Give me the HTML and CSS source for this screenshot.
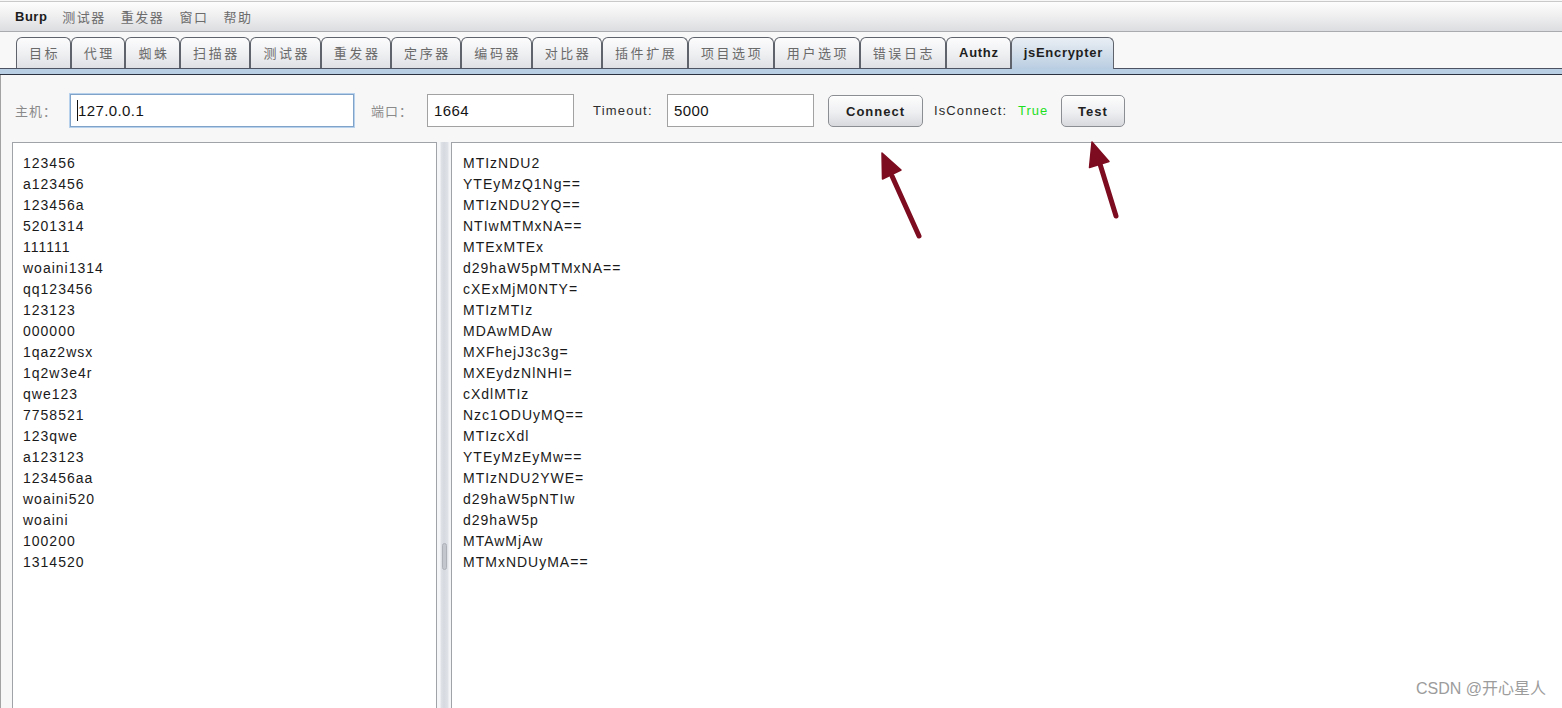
FILE: index.html
```html
<!DOCTYPE html>
<html lang="zh-CN">
<head>
<meta charset="utf-8">
<title>Burp - jsEncrypter</title>
<link rel="stylesheet" href="styles.css">
</head>
<body>
<div class="app">
  <div class="menubar">
    <span class="menu menu-main">Burp</span>
    <span class="menu">测试器</span>
    <span class="menu">重发器</span>
    <span class="menu">窗口</span>
    <span class="menu">帮助</span>
  </div>

  <div class="tabbar">
    <div class="tabs">
      <div class="tab">目标</div>
      <div class="tab">代理</div>
      <div class="tab">蜘蛛</div>
      <div class="tab">扫描器</div>
      <div class="tab">测试器</div>
      <div class="tab">重发器</div>
      <div class="tab">定序器</div>
      <div class="tab">编码器</div>
      <div class="tab">对比器</div>
      <div class="tab">插件扩展</div>
      <div class="tab">项目选项</div>
      <div class="tab">用户选项</div>
      <div class="tab">错误日志</div>
      <div class="tab tab-latin tab-authz">Authz</div>
      <div class="tab tab-latin tab-active">jsEncrypter</div>
    </div>
    <div class="tabstrip"></div>
  </div>

  <div class="content">
    <div class="form-row">
      <span class="lbl lbl-host">主机：</span>
      <div class="field field-host field-focus"><span class="caret"></span>127.0.0.1</div>
      <span class="lbl lbl-port">端口：</span>
      <div class="field field-port">1664</div>
      <span class="lbl lbl-timeout">Timeout:</span>
      <div class="field field-timeout">5000</div>
      <button class="btn btn-connect">Connect</button>
      <span class="lbl lbl-status">IsConnect:</span>
      <span class="status-true">True</span>
      <button class="btn btn-test">Test</button>
    </div>

    <div class="panes">
      <div class="pane pane-left">
        <div class="line">123456</div>
        <div class="line">a123456</div>
        <div class="line">123456a</div>
        <div class="line">5201314</div>
        <div class="line">111111</div>
        <div class="line">woaini1314</div>
        <div class="line">qq123456</div>
        <div class="line">123123</div>
        <div class="line">000000</div>
        <div class="line">1qaz2wsx</div>
        <div class="line">1q2w3e4r</div>
        <div class="line">qwe123</div>
        <div class="line">7758521</div>
        <div class="line">123qwe</div>
        <div class="line">a123123</div>
        <div class="line">123456aa</div>
        <div class="line">woaini520</div>
        <div class="line">woaini</div>
        <div class="line">100200</div>
        <div class="line">1314520</div>
      </div>
      <div class="splitter"><div class="grip"></div></div>
      <div class="pane pane-right">
        <div class="line">MTIzNDU2</div>
        <div class="line">YTEyMzQ1Ng==</div>
        <div class="line">MTIzNDU2YQ==</div>
        <div class="line">NTIwMTMxNA==</div>
        <div class="line">MTExMTEx</div>
        <div class="line">d29haW5pMTMxNA==</div>
        <div class="line">cXExMjM0NTY=</div>
        <div class="line">MTIzMTIz</div>
        <div class="line">MDAwMDAw</div>
        <div class="line">MXFhejJ3c3g=</div>
        <div class="line">MXEydzNlNHI=</div>
        <div class="line">cXdlMTIz</div>
        <div class="line">Nzc1ODUyMQ==</div>
        <div class="line">MTIzcXdl</div>
        <div class="line">YTEyMzEyMw==</div>
        <div class="line">MTIzNDU2YWE=</div>
        <div class="line">d29haW5pNTIw</div>
        <div class="line">d29haW5p</div>
        <div class="line">MTAwMjAw</div>
        <div class="line">MTMxNDUyMA==</div>
      </div>
    </div>
  </div>

  <svg class="annotations" width="1562" height="708" viewBox="0 0 1562 708" xmlns="http://www.w3.org/2000/svg">
    <g fill="#7d0c20" stroke="#7d0c20" stroke-linecap="round" stroke-linejoin="round">
      <line x1="919" y1="236" x2="892" y2="176" stroke-width="5"/>
      <polygon points="882,153 901,170 882.5,179" stroke-width="1.5"/>
      <line x1="1116" y1="216" x2="1100" y2="164" stroke-width="5"/>
      <polygon points="1092,142 1109,161.5 1089.5,167.5" stroke-width="1.5"/>
    </g>
  </svg>

  <div class="watermark">CSDN @开心星人</div>
</div>
</body>
</html>
```

FILE: styles.css
```css
* {
  box-sizing: border-box;
}

html, body {
  margin: 0;
  padding: 0;
  background: #ffffff;
}

body {
  font-family: "Liberation Sans", "Noto Sans CJK SC", sans-serif;
  color: #1a1a1a;
}

.app {
  position: relative;
  width: 1562px;
  height: 708px;
  overflow: hidden;
  background: #f7f7f7;
  display: flex;
  flex-direction: column;
}

/* ---------- menu bar ---------- */
.menubar {
  flex: none;
  margin-top: 1px;
  height: 31px;
  border-top: 1px solid #c9c9c9;
  border-bottom: 1px solid #a9abae;
  background: linear-gradient(#fdfdfd, #f0f0f1 45%, #dcdde0);
  display: flex;
  align-items: center;
  padding: 1px 0 0 15px;
}

.menu {
  font-family: "Noto Sans CJK SC", "Liberation Sans", sans-serif;
  font-size: 13px;
  letter-spacing: 1.5px;
  color: #6c6c6c;
  margin-right: 15px;
  line-height: 20px;
}

.menu-main {
  font-family: "Liberation Sans", sans-serif;
  font-weight: bold;
  letter-spacing: 0.5px;
  color: #1c1c1c;
}

/* ---------- tabs ---------- */
.tabbar {
  flex: none;
  padding-top: 5px;
  background: #f8f8f8;
}

.tabs {
  display: flex;
  align-items: flex-end;
  padding-left: 16px;
  height: 31px;
}

.tab {
  height: 31px;
  padding: 0 9.5px 0 12px;
  border: 1px solid #5f636b;
  border-bottom: none;
  border-radius: 6px 6px 0 0;
  background: linear-gradient(#fcfcfd, #eeeff1 55%, #dfe0e4);
  font-family: "Noto Sans CJK SC", "Liberation Sans", sans-serif;
  font-size: 13px;
  letter-spacing: 2.6px;
  line-height: 30px;
  color: #6a6a6a;
  white-space: nowrap;
}

.tab-latin {
  font-family: "Liberation Sans", sans-serif;
  font-weight: bold;
  letter-spacing: 0.7px;
  color: #1e1e1e;
  padding: 0 10.5px 0 11.5px;
}

.tab-authz {
  padding: 0 11.5px 0 12.5px;
}

.tab-active {
  position: relative;
  z-index: 1;
  height: 32px;
  margin-bottom: -1px;
  background: linear-gradient(#e9eef4, #cddbe9 60%, #b9cde2);
  line-height: 30px;
}

.tabstrip {
  height: 7px;
  border-top: 1px solid #4d5362;
  border-bottom: 1px solid #2c3240;
  background: #b9cfe4;
}

/* ---------- content ---------- */
.content {
  flex: 1;
  min-height: 0;
  border-left: 1px solid #a3a3a3;
  background: #f7f7f7;
  display: flex;
  flex-direction: column;
}

.form-row {
  flex: none;
  height: 67px;
  padding: 18px 0 0 14px;
  display: flex;
  align-items: flex-start;
}

.lbl {
  height: 35px;
  line-height: 35px;
  font-size: 13px;
  white-space: nowrap;
}

.lbl-host,
.lbl-port {
  font-family: "Noto Sans CJK SC", "Liberation Sans", sans-serif;
  color: #8a8a8a;
  letter-spacing: 1px;
}

.lbl-host {
  width: 55px;
}

.lbl-port {
  width: 56px;
  margin-left: 17px;
}

.lbl-timeout {
  width: 74px;
  margin-left: 19px;
  color: #2e2e2e;
  letter-spacing: 1.2px;
}

.lbl-status {
  width: 84px;
  margin-left: 11px;
  color: #2a2a2a;
  letter-spacing: 1.1px;
}

.status-true {
  width: 43px;
  height: 35px;
  line-height: 35px;
  font-size: 13px;
  letter-spacing: 1px;
  color: #1ee01e;
}

.field {
  height: 33px;
  margin-top: 1px;
  border: 1px solid #a2a2a2;
  background: #ffffff;
  font-size: 15px;
  letter-spacing: 0.4px;
  line-height: 31px;
  padding-left: 6px;
  color: #141414;
  white-space: nowrap;
  display: flex;
  align-items: center;
}

.field-host {
  width: 284px;
}

.field-focus {
  border-color: #7fa3c9;
  box-shadow: 0 0 0 1px #b7d1ec;
}

.caret {
  display: inline-block;
  width: 1px;
  height: 21px;
  background: #111111;
  margin-right: 0;
}

.field-port {
  width: 147px;
}

.field-timeout {
  width: 147px;
}

.btn {
  height: 32px;
  margin-top: 2px;
  padding: 0;
  border: 1px solid #8b8e93;
  border-radius: 5px;
  background: linear-gradient(#fdfdfd, #eeeff1 55%, #d8d9dd);
  box-shadow: inset 0 1px 0 #ffffff;
  font-family: "Liberation Sans", sans-serif;
  font-size: 13px;
  font-weight: bold;
  letter-spacing: 1px;
  color: #222222;
  text-align: center;
}

.btn-connect {
  width: 95px;
  margin-left: 14px;
}

.btn-test {
  width: 64px;
}

/* ---------- panes ---------- */
.panes {
  flex: none;
  height: 580px;
  display: flex;
  align-items: flex-start;
}

.pane {
  height: 580px;
  background: #ffffff;
  border: 1px solid #a0a3a7;
  padding-top: 10px;
  font-family: "Liberation Sans", sans-serif;
  font-size: 14px;
  letter-spacing: 1px;
  line-height: 21px;
  color: #1a1a1a;
}

.pane-left {
  width: 425px;
  margin-left: 11px;
  padding-left: 10px;
}

.pane-right {
  flex: 1;
  margin-right: -2px;
  padding-left: 11px;
}

.line {
  height: 21px;
  white-space: nowrap;
}

.splitter {
  flex: none;
  width: 14px;
  height: 580px;
  background: linear-gradient(to right, #f5f6f8 0, #f5f6f8 3px, #dfe2e7 4px, #d6dae0 7px, #dfe2e7 11px, #f3f4f6 12px);
  display: flex;
  flex-direction: column;
  align-items: center;
}

.grip {
  width: 5px;
  height: 27px;
  margin-top: 401px;
  border-radius: 3px;
  background: #c3c7cd;
  border: 1px solid #aeb2b8;
}

/* ---------- overlays ---------- */
.annotations {
  position: absolute;
  left: 0;
  top: 0;
  pointer-events: none;
}

.watermark {
  position: absolute;
  right: 16px;
  bottom: 9px;
  font-family: "Liberation Sans", "Noto Sans CJK SC", sans-serif;
  font-size: 16px;
  line-height: 20px;
  color: #9c9c9c;
}
```
